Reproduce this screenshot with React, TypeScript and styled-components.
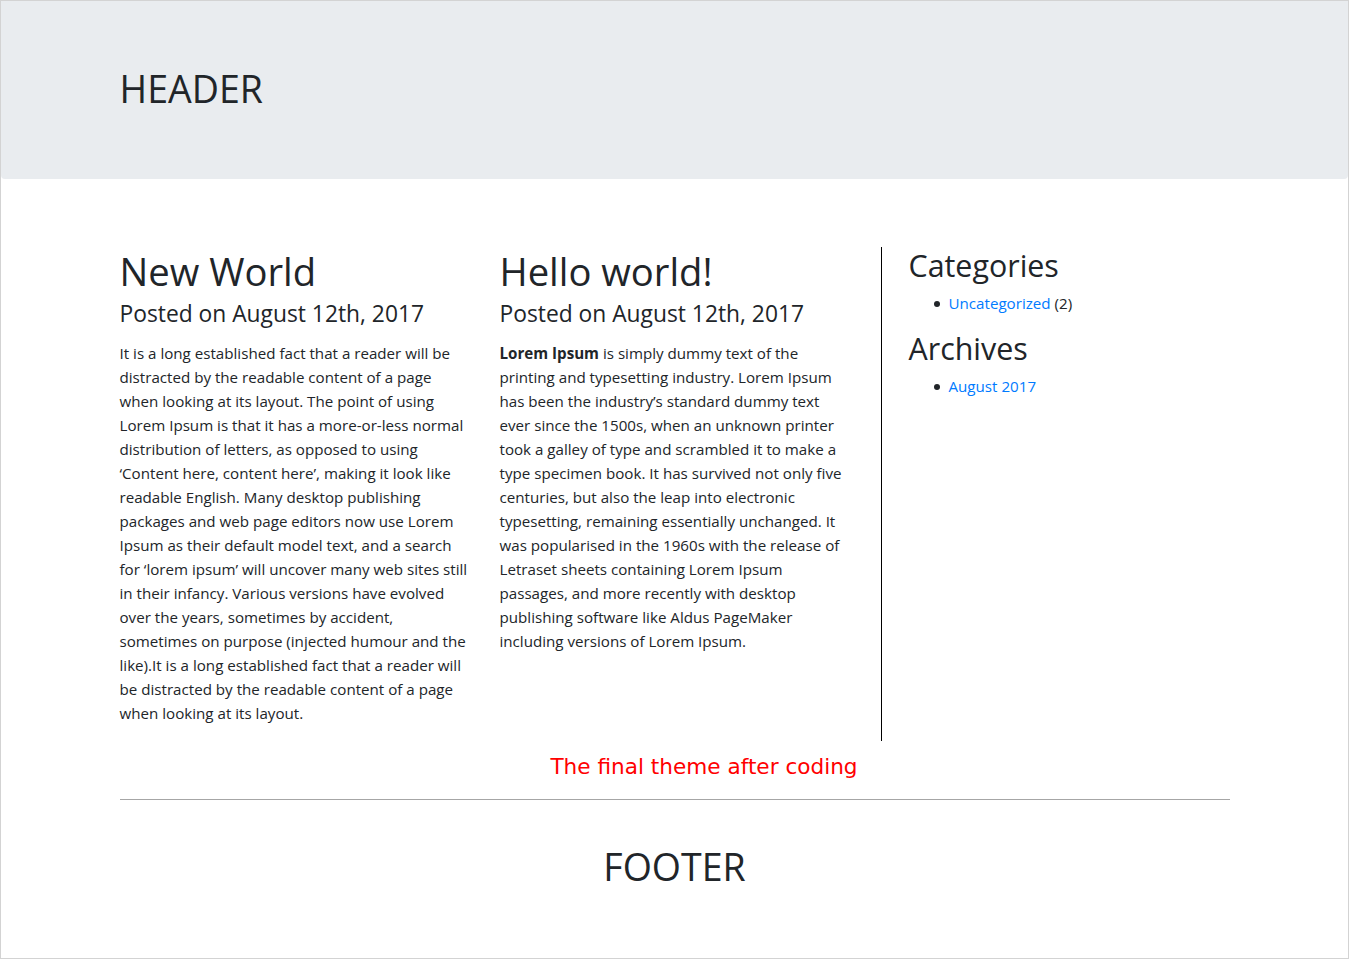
import React from "react";
import styled, { createGlobalStyle } from "styled-components";

const GlobalStyle = createGlobalStyle`
  html, body { margin: 0; padding: 0; }
  body {
    font-family: "Open Sans", "Noto Sans", Arial, sans-serif;
    color: #212529;
    background: #ffffff;
  }
  * { box-sizing: border-box; }
`;

const Frame = styled.div`
  border: 1px solid #d3d3d3;
  min-height: 100vh;
  display: flex;
  flex-direction: column;
`;

const Header = styled.header`
  background: #e9ecef;
  height: 178px;
  border-radius: 0 0 4px 4px;
  display: flex;
  align-items: center;
  padding-bottom: 2px;
`;

const Container = styled.div`
  width: 1110px;
  margin: 0 auto;
`;

const BigTitle = styled.h1<{ $center?: boolean }>`
  margin: 0;
  font-size: 37.5px;
  font-weight: 400;
  line-height: 48px;
  text-align: ${(p) => (p.$center ? "center" : "left")};
`;

const Main = styled.main`
  width: 1110px;
  margin: 68px auto 0;
  display: flex;
  align-items: stretch;
`;

const Posts = styled.div`
  display: grid;
  grid-template-columns: 350px 350px;
  column-gap: 30px;
  align-items: start;
`;

const Post = styled.article``;

const PostTitle = styled.h1`
  margin: 0 0 4px;
  font-size: 38.2px;
  font-weight: 400;
  line-height: 48px;
`;

const PostMeta = styled.h4`
  margin: 0 0 13px;
  font-size: 22.8px;
  font-weight: 400;
  line-height: 29px;
`;

const Body = styled.p`
  margin: 0 0 16px;
  font-size: 15.15px;
  line-height: 24px;
  white-space: nowrap;
  strong { font-weight: 700; }
`;

const Sidebar = styled.aside`
  margin-left: 31px;
  border-left: 1px solid #000;
  padding-left: 27px;
  flex: 1;
`;

const WidgetTitle = styled.h2`
  margin: 0 0 6px;
  font-size: 30.4px;
  font-weight: 400;
  line-height: 38px;
`;

const WidgetList = styled.ul`
  margin: 0 0 15px;
  padding-left: 40px;
  list-style: none;
  font-size: 15.15px;
  line-height: 24px;
`;

const WidgetItem = styled.li`
  position: relative;
  &::before {
    content: "";
    position: absolute;
    left: -15px;
    top: 10px;
    width: 6px;
    height: 6px;
    border-radius: 50%;
    background: #212529;
  }
`;

const Link = styled.a`
  color: #007bff;
  text-decoration: none;
`;

const Caption = styled.div`
  margin-top: 13px;
  padding-left: 59px;
  text-align: center;
  font-family: "DejaVu Sans", Verdana, sans-serif;
  font-size: 21.6px;
  line-height: 26px;
  color: #ff0000;
`;

const Rule = styled.hr`
  width: 1110px;
  margin: 19px auto 0;
  border: 0;
  border-top: 1px solid #a6a6a6;
`;

const Footer = styled.footer`
  padding-top: 43px;
`;

const post1 = [
  "It is a long established fact that a reader will be",
  "distracted by the readable content of a page",
  "when looking at its layout. The point of using",
  "Lorem Ipsum is that it has a more-or-less normal",
  "distribution of letters, as opposed to using",
  "\u2018Content here, content here\u2019, making it look like",
  "readable English. Many desktop publishing",
  "packages and web page editors now use Lorem",
  "Ipsum as their default model text, and a search",
  "for \u2018lorem ipsum\u2019 will uncover many web sites still",
  "in their infancy. Various versions have evolved",
  "over the years, sometimes by accident,",
  "sometimes on purpose (injected humour and the",
  "like).It is a long established fact that a reader will",
  "be distracted by the readable content of a page",
  "when looking at its layout.",
];

const post2 = [
  "is simply dummy text of the",
  "printing and typesetting industry. Lorem Ipsum",
  "has been the industry\u2019s standard dummy text",
  "ever since the 1500s, when an unknown printer",
  "took a galley of type and scrambled it to make a",
  "type specimen book. It has survived not only five",
  "centuries, but also the leap into electronic",
  "typesetting, remaining essentially unchanged. It",
  "was popularised in the 1960s with the release of",
  "Letraset sheets containing Lorem Ipsum",
  "passages, and more recently with desktop",
  "publishing software like Aldus PageMaker",
  "including versions of Lorem Ipsum.",
];

const Lines: React.FC<{ lines: string[]; lead?: React.ReactNode }> = ({ lines, lead }) => (
  <>
    {lines.map((l, i) => (
      <React.Fragment key={i}>
        {i === 0 && lead}
        {l}
        {i < lines.length - 1 && <br />}
      </React.Fragment>
    ))}
  </>
);

export default function App() {
  return (
    <>
      <GlobalStyle />
      <Frame>
        <Header>
          <Container>
            <BigTitle>HEADER</BigTitle>
          </Container>
        </Header>
        <Main>
          <Posts>
            <Post>
              <PostTitle>New World</PostTitle>
              <PostMeta>Posted on August 12th, 2017</PostMeta>
              <Body>
                <Lines lines={post1} />
              </Body>
            </Post>
            <Post>
              <PostTitle>Hello world!</PostTitle>
              <PostMeta>Posted on August 12th, 2017</PostMeta>
              <Body>
                <Lines lines={post2} lead={<><strong>Lorem Ipsum</strong> </>} />
              </Body>
            </Post>
          </Posts>
          <Sidebar>
            <WidgetTitle>Categories</WidgetTitle>
            <WidgetList>
              <WidgetItem>
                <Link href="#">Uncategorized</Link> (2)
              </WidgetItem>
            </WidgetList>
            <WidgetTitle>Archives</WidgetTitle>
            <WidgetList>
              <WidgetItem>
                <Link href="#">August 2017</Link>
              </WidgetItem>
            </WidgetList>
          </Sidebar>
        </Main>
        <Caption>The final theme after coding</Caption>
        <Rule />
        <Footer>
          <BigTitle $center>FOOTER</BigTitle>
        </Footer>
      </Frame>
    </>
  );
}
